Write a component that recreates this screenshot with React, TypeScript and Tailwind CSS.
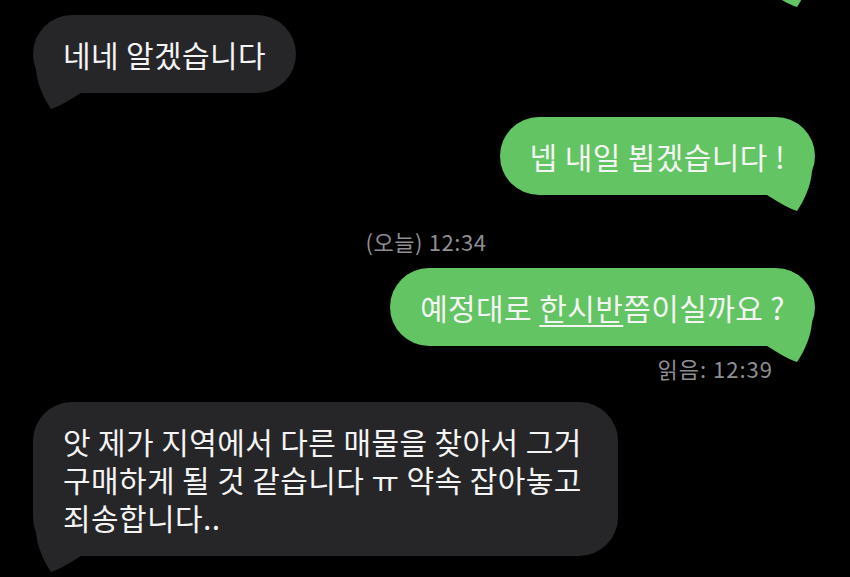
import React from "react";

const GREY = "#262629";
const GREEN = "#63c463";

function Tail({ side, color }: { side: "left" | "right"; color: string }) {
  return (
    <svg
      width="50"
      height="40"
      viewBox="0 0 50 40"
      className={
        side === "left"
          ? "absolute left-0 bottom-[-16px]"
          : "absolute right-0 bottom-[-16px] -scale-x-100"
      }
    >
      <path d="M3 0 C4 14 10 28 18 40 C27 37 37 31 48 24 L48 0 Z" fill={color} />
    </svg>
  );
}

function Bubble({
  side,
  children,
  className = "",
}: {
  side: "left" | "right";
  children?: React.ReactNode;
  className?: string;
}) {
  const isLeft = side === "left";
  return (
    <div
      className={
        "relative rounded-[39px] px-[30px] py-[20px] text-[30px] leading-[38px] tracking-[0.4px] text-[#f4f4f4] whitespace-nowrap " +
        (isLeft ? "self-start ml-[33px] bg-[#262629] " : "self-end mr-[35px] bg-[#63c463] ") +
        className
      }
    >
      <Tail side={side} color={isLeft ? GREY : GREEN} />
      <div className="relative flex flex-col">{children}</div>
    </div>
  );
}

export default function App() {
  return (
    <div className="w-[850px] h-[577px] bg-black overflow-hidden flex flex-col font-['Noto_Sans_CJK_KR','Noto_Sans',sans-serif]">
      <Bubble side="right" className="mt-[-87px] w-[240px] h-[78px]" />
      <Bubble side="left" className="mt-[24px]">
        <span>네네 알겠습니다</span>
      </Bubble>
      <Bubble side="right" className="mt-[24px]">
        <span>넵 내일 뵙겠습니다 !</span>
      </Bubble>
      <div className="mt-[34px] h-[24px] text-center text-[22px] leading-[24px] tracking-[0.6px] text-[#8e8e93] pl-[2px]">
        (오늘) 12:34
      </div>
      <Bubble side="right" className="mt-[15px]">
        <span>
          예정대로{" "}
          <span className="underline decoration-[1.5px] underline-offset-[5px]">한시반</span>
          쯤이실까요 ?
        </span>
      </Bubble>
      <div className="mt-[10px] self-end mr-[77px] h-[24px] text-[22px] leading-[24px] tracking-[1px] text-[#8e8e93]">
        읽음: 12:39
      </div>
      <Bubble side="left" className="mt-[22px] w-[585px]">
        <span className="h-[38px]">앗 제가 지역에서 다른 매물을 찾아서 그거</span>
        <span className="h-[38px]">구매하게 될 것 같습니다 ㅠ 약속 잡아놓고</span>
        <span className="h-[38px]">죄송합니다..</span>
      </Bubble>
    </div>
  );
}
